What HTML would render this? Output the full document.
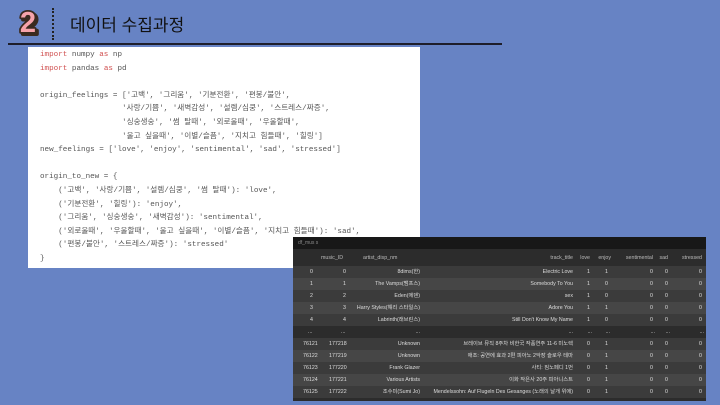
<!DOCTYPE html>
<html><head><meta charset="utf-8"><style>
*{margin:0;padding:0;box-sizing:border-box}
body{width:720px;height:405px;background:#6783c4;position:relative;overflow:hidden;font-family:"Liberation Sans","Noto Sans CJK KR",sans-serif}
.two{position:absolute;left:12px;top:6px}
.dots{position:absolute;left:52px;top:8px;height:32px;border-left:2px dotted #222}
.title{position:absolute;left:70px;top:11px;font-size:17px;color:#111}
.hr{position:absolute;left:8px;top:43px;width:494px;height:2px;background:#1e1e2a}
.code{position:absolute;left:28px;top:47px;width:392px;height:221px;background:#fff;font:7.6px "Liberation Mono","Noto Sans CJK KR",monospace;color:#555;padding:2px 0 0 12px;filter:blur(.3px)}
.code div{height:13.6px;line-height:13.6px;white-space:pre}
.k{color:#d05050}
.tbl{position:absolute;left:293px;top:237px;width:413px;height:164px;background:#2c2c2c;font:5.3px/6px "Liberation Sans","Noto Sans CJK KR",sans-serif;color:#ddd;filter:blur(.3px)}
.bar{height:12px;background:#181818;color:#888;padding:3px 0 0 5px;font-size:5px}
.r{position:relative;height:12px;overflow:hidden}
.r span{position:absolute;top:3px;white-space:nowrap;line-height:6px;height:6px}
.a{background:#3b3b3b}.b{background:#464646}.h{height:17px;background:#2c2c2c;color:#bbb}
.h span{top:6px}
</style></head><body>
<svg class="two" width="34" height="34" viewBox="0 0 34 34"><text x="18" y="28" text-anchor="middle" font-family="Liberation Sans" font-weight="900" font-size="29" fill="#3a2a20" stroke="#3a2a20" stroke-width="4" stroke-linejoin="round">2</text><text x="16" y="26" text-anchor="middle" font-family="Liberation Sans" font-weight="900" font-size="29" fill="#f6a3ab" stroke="#3a2a20" stroke-width="3.5" stroke-linejoin="round" paint-order="stroke">2</text></svg>
<div class="dots"></div>
<div class="title">데이터 수집과정</div>
<div class="hr"></div>
<div class="code">
<div><span class="k">import</span> numpy <span class="k">as</span> np</div>
<div><span class="k">import</span> pandas <span class="k">as</span> pd</div>
<div> </div>
<div>origin_feelings = ['고백', '그리움', '기분전환', '편봉/불안',</div>
<div>                  '사랑/기쁨', '새벽감성', '설렘/심쿵', '스트레스/짜증',</div>
<div>                  '싱숭생숭', '썸 탈때', '외로울때', '우울할때',</div>
<div>                  '울고 싶을때', '이별/슬픔', '지치고 힘들때', '힐링']</div>
<div>new_feelings = ['love', 'enjoy', 'sentimental', 'sad', 'stressed']</div>
<div> </div>
<div>origin_to_new = {</div>
<div>    ('고백', '사랑/기쁨', '설렘/심쿵', '썸 탈때'): 'love',</div>
<div>    ('기분전환', '힐링'): 'enjoy',</div>
<div>    ('그리움', '싱숭생숭', '새벽감성'): 'sentimental',</div>
<div>    ('외로울때', '우울할때', '울고 싶을때', '이별/슬픔', '지치고 힘들때'): 'sad',</div>
<div>    ('편봉/불안', '스트레스/짜증'): 'stressed'</div>
<div>}</div>
</div>
<div class="tbl">
<div class="bar">df_mus s</div>
<div class="r h"><span style="left:28px">music_ID</span><span style="left:70px">artist_disp_nm</span><span style="right:133px">track_title</span><span style="right:116px">love</span><span style="right:95px">enjoy</span><span style="right:53px">sentimental</span><span style="right:38px">sad</span><span style="right:4px">stressed</span></div>
<div class="r a"><span style="left:17px">0</span><span style="left:50px">0</span><span style="right:286px">8dims(한)</span><span style="right:133px">Electric Love</span><span style="right:116px">1</span><span style="right:98px">1</span><span style="right:53px">0</span><span style="right:38px">0</span><span style="right:4px">0</span></div>
<div class="r b"><span style="left:17px">1</span><span style="left:50px">1</span><span style="right:286px">The Vamps(뱀프스)</span><span style="right:133px">Somebody To You</span><span style="right:116px">1</span><span style="right:98px">0</span><span style="right:53px">0</span><span style="right:38px">0</span><span style="right:4px">0</span></div>
<div class="r a"><span style="left:17px">2</span><span style="left:50px">2</span><span style="right:286px">Eden(에덴)</span><span style="right:133px">sex</span><span style="right:116px">1</span><span style="right:98px">0</span><span style="right:53px">0</span><span style="right:38px">0</span><span style="right:4px">0</span></div>
<div class="r b"><span style="left:17px">3</span><span style="left:50px">3</span><span style="right:286px">Harry Styles(해리 스타일스)</span><span style="right:133px">Adore You</span><span style="right:116px">1</span><span style="right:98px">1</span><span style="right:53px">0</span><span style="right:38px">0</span><span style="right:4px">0</span></div>
<div class="r a"><span style="left:17px">4</span><span style="left:50px">4</span><span style="right:286px">Labrinth(래브린스)</span><span style="right:133px">Still Don't Know My Name</span><span style="right:116px">1</span><span style="right:98px">0</span><span style="right:53px">0</span><span style="right:38px">0</span><span style="right:4px">0</span></div>
<div class="r" style="background:#2c2c2c"><span style="left:15px">...</span><span style="left:48px">...</span><span style="right:286px">...</span><span style="right:133px">...</span><span style="right:114px">...</span><span style="right:96px">...</span><span style="right:51px">...</span><span style="right:36px">...</span><span style="right:2px">...</span></div>
<div class="r a"><span style="left:10px">76121</span><span style="left:36px">177218</span><span style="right:286px">Unknown</span><span style="right:133px">브레이브 뮤직 8주차 비한국 작품연주 11-6 미노렉</span><span style="right:116px">0</span><span style="right:98px">1</span><span style="right:53px">0</span><span style="right:38px">0</span><span style="right:4px">0</span></div>
<div class="r b"><span style="left:10px">76122</span><span style="left:36px">177219</span><span style="right:286px">Unknown</span><span style="right:133px">애조: 공연에 효과 2편 피아노 2악장 슬로우 테마</span><span style="right:116px">0</span><span style="right:98px">1</span><span style="right:53px">0</span><span style="right:38px">0</span><span style="right:4px">0</span></div>
<div class="r a"><span style="left:10px">76123</span><span style="left:36px">177220</span><span style="right:286px">Frank Glazer</span><span style="right:133px">사티: 짐노페디 1번</span><span style="right:116px">0</span><span style="right:98px">1</span><span style="right:53px">0</span><span style="right:38px">0</span><span style="right:4px">0</span></div>
<div class="r b"><span style="left:10px">76124</span><span style="left:36px">177221</span><span style="right:286px">Various Artists</span><span style="right:133px">이화 작은사 20주 피아니스트</span><span style="right:116px">0</span><span style="right:98px">1</span><span style="right:53px">0</span><span style="right:38px">0</span><span style="right:4px">0</span></div>
<div class="r a"><span style="left:10px">76125</span><span style="left:36px">177222</span><span style="right:286px">조수미(Sumi Jo)</span><span style="right:133px">Mendelssohn: Auf Flugeln Des Gesanges (노래의 날개 위에)</span><span style="right:116px">0</span><span style="right:98px">1</span><span style="right:53px">0</span><span style="right:38px">0</span><span style="right:4px">0</span></div>
</div>
</body></html>
